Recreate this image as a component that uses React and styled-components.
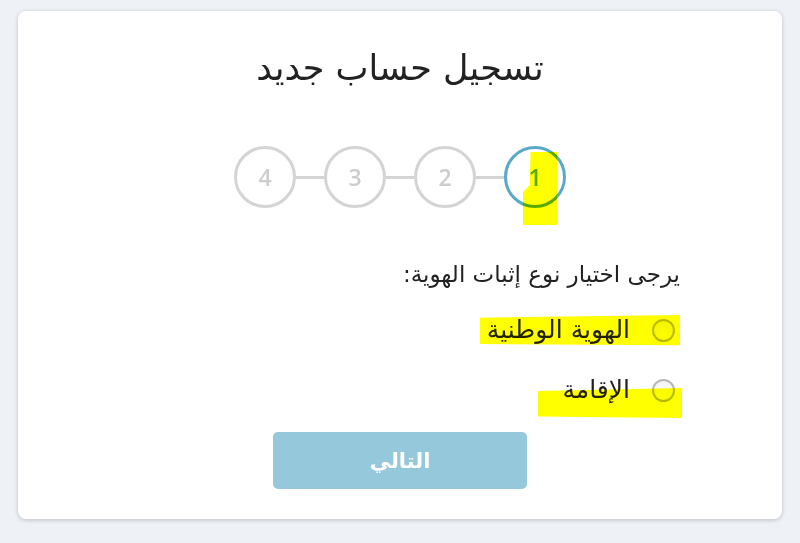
import styled, { createGlobalStyle } from "styled-components";

const GlobalStyle = createGlobalStyle`
  body {
    margin: 0;
    background: #eef2f7;
    font-family: "DejaVu Sans", "Noto Sans", sans-serif;
  }
`;

const Page = styled.div`
  padding: 11px 18px 24px;
`;

const Card = styled.div`
  direction: rtl;
  height: 508px;
  box-sizing: border-box;
  background: #fff;
  border-radius: 8px;
  box-shadow: 0 1px 4px rgba(0, 0, 0, 0.22);
  padding-top: 35px;
  display: flex;
  flex-direction: column;
  align-items: center;
`;

const Title = styled.h1`
  margin: 0;
  font-size: 35px;
  font-weight: normal;
  line-height: 44px;
  color: #222;
`;

const Stepper = styled.div`
  margin-top: 56px;
  display: flex;
  align-items: center;
`;

const Step = styled.div`
  position: relative;
  width: 62px;
  height: 62px;
  box-sizing: border-box;
  border-radius: 50%;
  border: 3px solid ${(p) => (p.$active ? "#5aa9c9" : "#d4d4d4")};
  display: flex;
  align-items: center;
  justify-content: center;
  font-family: "Open Sans", sans-serif;
  font-weight: 600;
  font-size: 23px;
  color: ${(p) => (p.$active ? "#5aa9c9" : "#cdcdcd")};
`;

const Line = styled.div`
  width: 28px;
  height: 3px;
  background: #d4d4d4;
`;

const Form = styled.div`
  width: 560px;
  margin-top: 50px;
  display: flex;
  flex-direction: column;
`;

const Prompt = styled.p`
  margin: 0;
  font-size: 23px;
  line-height: 32px;
  color: #222;
`;

const Option = styled.label`
  position: relative;
  display: flex;
  align-items: center;
  gap: 22px;
  margin-top: ${(p) => p.$gap}px;
  padding-right: 5px;
  font-size: 25px;
  line-height: 34px;
  color: #222;
  cursor: pointer;
`;

const Radio = styled.span`
  width: 23px;
  height: 23px;
  box-sizing: border-box;
  border-radius: 50%;
  border: 2px solid #b8b8b8;
  background: radial-gradient(circle at 50% 75%, #ffffff, #f1f1f1);
`;

const Mark = styled.span`
  position: absolute;
  background: #ffff00;
  mix-blend-mode: multiply;
  pointer-events: none;
`;

const StepMark = styled(Mark)`
  right: 6px;
  top: 3px;
  width: 34px;
  height: 73px;
  clip-path: polygon(22% 0, 100% 0, 100% 100%, 0 100%, 0 55%, 20% 45%);
`;

const NationalMark = styled(Mark)`
  right: 0;
  top: 2px;
  width: 200px;
  height: 33px;
  clip-path: polygon(0 8%, 100% 0, 100% 92%, 0 88%);
`;

const ResidencyMark = styled(Mark)`
  right: -2px;
  top: 15px;
  width: 144px;
  height: 30px;
  clip-path: polygon(0 10%, 100% 0, 100% 100%, 0 95%);
`;

const Button = styled.button`
  align-self: center;
  margin-top: 25px;
  width: 254px;
  height: 57px;
  border: none;
  border-radius: 5px;
  background: #95c8db;
  color: #fff;
  font-family: "DejaVu Sans", sans-serif;
  font-size: 21px;
  font-weight: bold;
`;

export default function App() {
  return (
    <Page>
      <GlobalStyle />
      <Card>
        <Title>تسجيل حساب جديد</Title>
        <Stepper>
          <Step $active>
            1
            <StepMark />
          </Step>
          <Line />
          <Step>2</Step>
          <Line />
          <Step>3</Step>
          <Line />
          <Step>4</Step>
        </Stepper>
        <Form>
          <Prompt>يرجى اختيار نوع إثبات الهوية:</Prompt>
          <Option $gap={23}>
            <Radio />
            <span>الهوية الوطنية</span>
            <NationalMark />
          </Option>
          <Option $gap={26}>
            <Radio />
            <span>الإقامة</span>
            <ResidencyMark />
          </Option>
          <Button>التالي</Button>
        </Form>
      </Card>
    </Page>
  );
}
